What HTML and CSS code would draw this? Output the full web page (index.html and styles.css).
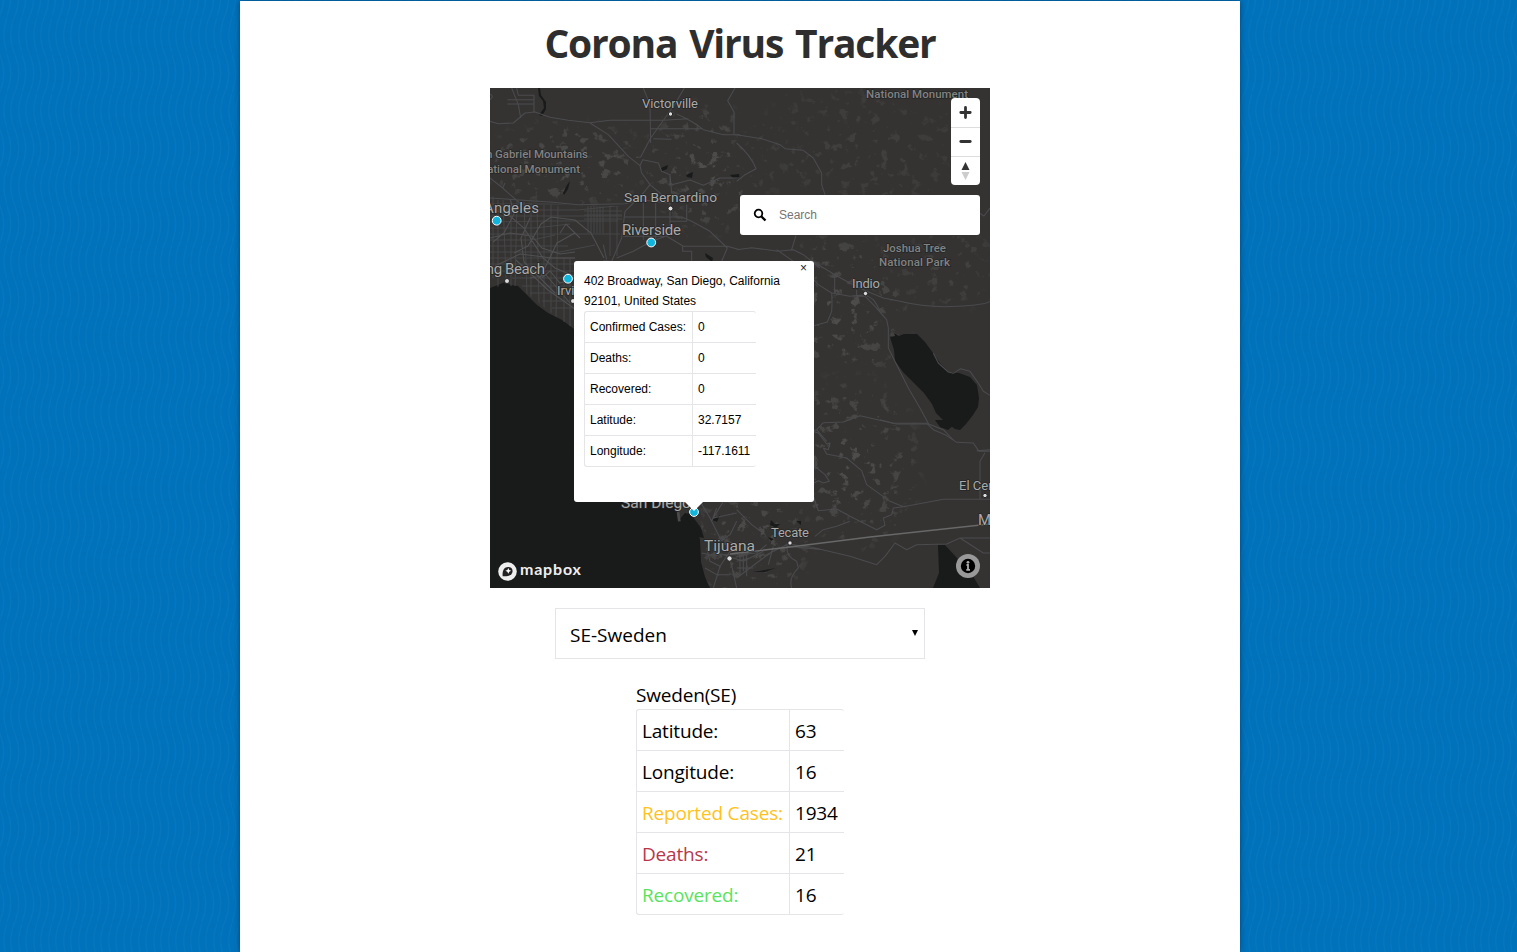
FILE: index.html
```html
<!DOCTYPE html>
<html lang="en">
<head>
<meta charset="utf-8">
<title>Corona Virus Tracker</title>
<link rel="stylesheet" href="styles.css">
</head>
<body>
<main class="page">
  <h1 class="title">Corona Virus Tracker</h1>
  <section class="map">
    <svg class="map-canvas" viewBox="0 0 500 500" width="500" height="500">
      <defs>
        <filter id="terrain" x="0" y="0" width="100%" height="100%">
          <feTurbulence type="fractalNoise" baseFrequency=".1 .11" numOctaves="4" seed="12"/>
          <feColorMatrix values="0 0 0 0 .27  0 0 0 0 .27  0 0 0 0 .265  9 0 0 0 -5.5"/>
        </filter>
        <radialGradient id="fade"><stop offset="0" stop-color="#fff"/><stop offset=".7" stop-color="#999"/><stop offset="1" stop-color="#000"/></radialGradient>
        <mask id="hills">
          <ellipse cx="80" cy="75" rx="100" ry="50" fill="url(#fade)"/>
          <ellipse cx="215" cy="80" rx="75" ry="75" fill="url(#fade)"/>
          <ellipse cx="370" cy="60" rx="130" ry="80" fill="url(#fade)" opacity=".5"/>
          <ellipse cx="350" cy="220" rx="80" ry="90" fill="url(#fade)"/>
          <ellipse cx="360" cy="375" rx="80" ry="100" fill="url(#fade)"/>
          <ellipse cx="260" cy="455" rx="70" ry="70" fill="url(#fade)"/>
          <ellipse cx="460" cy="180" rx="60" ry="50" fill="url(#fade)" opacity=".6"/>
        </mask>
        <clipPath id="basin"><path d="M0 108L45 114L92 118L135 118V170H85V242L65 228L40 208L26 198L0 199Z"/></clipPath>
      </defs>
      <rect width="500" height="500" fill="#343332"/>
      <rect width="500" height="500" filter="url(#terrain)" mask="url(#hills)" opacity=".3"/>

      <g fill="#191a1a">
        <path d="M0 200L8 197L15 194L21 197L28 198L37 207L47 217L58 225L72 232L84 241L120 300L160 370L187 414L189 432L195 425L202 428L208 443L210 452L211 474L215 489L220 500H0Z"/>
        <path d="M194 426L200 425L211 440L214 450L209 449Z"/>
        <path d="M400 249L405 248L404 245L409 248L414 246H427L435 254L443 265L450 275L459 284L469 285L480 289L487 297L489 310L488 319L483 327L476 336L470 342L465 341L454 333L446 325L442 316L434 305L426 297L413 284L405 273L404 262Z"/>
        <path d="M448 457H455L467 470L480 483L490 500H443L449 485Z"/>
        <path d="M445 332H465L465 336L458 342L450 339Z"/>
        <path d="M48 0H50L51 7L56 14V21L52 28L49 27L54 20L53 13L49 8Z"/>
        <path d="M73 105L77 97L80 93L78 101L74 107ZM171 80L178 77L177 81L172 83ZM196 87L203 84L202 90L197 89ZM240 87L249 86L250 91L243 90ZM215 165L223 170L222 174L216 169ZM281 432L285 436H290L286 440L280 437ZM306 433H311V437ZM222 432L230 427L227 434ZM278 449L284 451L281 453ZM263 484L275 482L286 480L280 482L275 484Z"/>
      </g>

      <g class="streets" clip-path="url(#basin)">
        <path d="M0 116H140M0 122H88L135 117M0 128H132M0 134L53 133H128M0 140H45L80 136M0 146H130M0 152H42L65 147M0 158H78M0 164H70L105 157M0 170H85M0 176H85M0 183H85M22 190H85M32 198H85M40 205H85M52 213H85M62 220H85M3 108V190M8 112V200M13 112L16 190M21 115V199M27 112L25 200M34 114L37 207M41 115V210M47 117L49 217M54 117V222M61 117V226M68 118L66 230M74 170V234M80 170V238M98 118V145M101 118V145M104 118V145M107 118V145M110 118V145M113 118V145M120 117V168M127 117V168M94 123H132M94 127H132M94 131H132"/>
        <path class="freeway" d="M0 120L20 128L34 140L53 170L65 180L84 188M0 150L20 145L42 148L52 160L70 166L85 164M12 100L20 110L24 126L14 145L3 154M24 165L38 158L51 136L61 129L85 132L101 145L114 170M26 172L58 202L85 221M40 130L31 150L34 174L65 205M85 145L67 155L50 190M5 178L30 166L62 170L85 170M70 145L76 136L90 150M52 190L60 183L70 195L84 190M40 190L56 187L80 215"/>
      </g>
      <g class="roads" transform="scale(.33333)">
        <path d="M0 100L25 107L70 105L105 75L135 72L180 88L235 97L300 104L360 97H520L595 92M65 0L85 50L92 90M80 0L85 22H132V72M52 35H132M52 48H132M0 35Q14 25 0 18M460 0L480 50L482 165M490 152L545 154M583 0L555 48L482 150L452 207L438 208M560 78Q610 100 640 125L700 140H750M482 122H635M735 0L713 38L732 72V140M300 105L355 140L415 205L450 233L458 215L505 225L515 250L540 260V292L600 276L640 292L690 270H750M450 233L455 255L480 290L510 315L540 350M540 260L545 315M480 290L460 315L405 370L395 450L365 520L340 518M0 330L180 342L265 350L405 347L450 335L540 345M405 387H575L605 400L660 430L712 480M540 345V440L485 460L430 490L380 510M400 445H530L580 475H712L750 485M460 345V455M497 345V455M540 400H590V350M340 470L350 515M540 420L510 430M712 480L695 520M578 475V490H605V518M0 270L38 300L60 320L90 345M45 285L38 300"/>
        <path d="M740 140L815 152L870 170L885 182L940 187L970 210L995 255L995 290L1005 320L1000 365M740 165Q785 205 798 242L765 260L740 280M740 485L785 479L865 490L910 485L940 500L990 540M860 485L910 520M905 485L918 442M1460 370L1482 384L1500 360"/>
        <path d="M962 516L1034 560L1085 588L1130 610L1180 630L1230 640Q1310 660 1400 655T1500 640M1034 560V615M962 565L985 590L1025 615L1080 625L1126 620M1025 615Q1027 640 1025 670L1012 702L960 716M1100 605V625H1126L1155 655L1190 695L1195 720V780L1220 830L1255 900L1290 960L1316 1008L1360 1025L1390 1056M1126 620L1150 635L1160 650L1170 668M1316 1008H1220L1110 983L1060 1002L1000 1004L980 1025L962 1030M980 1025L1010 1060M1330 796L1345 825L1375 852L1390 856L1412 842L1440 850L1465 885L1480 910L1500 922"/>
        <path d="M962 1028L985 1035L1010 1068L1020 1065L1015 1085L1000 1080L1010 1098L1070 1110L1115 1148L1130 1190L1200 1240L1240 1256L1360 1234H1500M962 1125L1005 1160L1018 1180L1000 1185L985 1178L962 1190M962 1200L985 1268L1040 1263L1080 1285L1160 1325L1185 1312L1180 1290L1205 1280L1210 1260L1240 1256M975 1345L1000 1325L1040 1315L1080 1300M1170 995L1210 1006H1310L1330 1025L1365 1040L1400 1063L1450 1065L1467 1090H1500M1485 1094L1470 1120V1235M1460 1088L1500 1085M740 1265L785 1310L826 1340M892 1365Q884 1405 920 1420L925 1440Q895 1470 905 1500M892 1368L965 1378L1080 1405L1160 1430L1185 1405L1215 1365L1250 1385L1280 1370L1370 1368L1410 1350H1500M892 1375L1000 1385M890 1370L840 1395L780 1440L740 1470M740 1400L800 1395L830 1370M850 1375L835 1430M1410 1350L1480 1395H1500"/>
        <path d="M630 1240L660 1290L690 1350L740 1370M680 1260L665 1300M700 1240L670 1290L740 1275M650 1380L660 1420L690 1435L720 1390L760 1395M635 1395L660 1400L740 1400M645 1440L680 1460L720 1460M690 1435L670 1500M700 1400L760 1420L820 1390M720 1410L740 1500M690 1360L720 1340L740 1300M740 1420L780 1410M750 1400V1465M760 1380V1450M770 1400V1465M740 1440H790"/>
        <path d="M564 1272L568 1300" stroke-width="8"/>
      </g>
      <path d="M240 466L300 459L380 449L500 436" fill="none" stroke="#686868" stroke-width="1.3"/>

      <g class="labels">
        <text x="152" y="20" textLength="56">Victorville</text>
        <text x="134" y="114" textLength="93" lengthAdjust="spacingAndGlyphs">San Bernardino</text>
        <g font-size="15"><text x="-6" y="125" textLength="55">Angeles</text><text x="132" y="147" textLength="59">Riverside</text><text x="-20" y="186" textLength="75">Long Beach</text><text x="131" y="420" textLength="70" lengthAdjust="spacingAndGlyphs">San Diego</text><text x="214" y="463" textLength="51" lengthAdjust="spacingAndGlyphs">Tijuana</text><text x="488" y="437">Mexicali</text></g>
        <text x="67" y="207">Irvine</text>
        <text x="362" y="200" textLength="28">Indio</text><text x="281" y="449" textLength="38">Tecate</text><text x="469" y="402">El Centro</text>
      </g>
      <g class="labels parks">
        <text x="376" y="10" textLength="102">National Monument</text>
        <text x="-17" y="70" textLength="115">San Gabriel Mountains</text><text x="-11" y="85" textLength="101">National Monument</text>
        <text x="393" y="164" textLength="63">Joshua Tree</text><text x="389" y="178" textLength="71">National Park</text>
      </g>
      <g fill="#ddd" stroke="#222" stroke-width="1"><circle cx="180.500" cy="26" r="2.200"/><circle cx="180.500" cy="120.500" r="2.500"/><circle cx="17" cy="193" r="2.500"/><circle cx="83" cy="213" r="2.500"/><circle cx="375.500" cy="205.500" r="2.200"/><circle cx="300" cy="455" r="2.200"/><circle cx="239.500" cy="470.500" r="2.700"/><circle cx="495" cy="407.500" r="2.200"/></g>
      <g fill="#11b4da" stroke="#fff"><circle cx="6.700" cy="132.700" r="4.400"/><circle cx="161.200" cy="154.500" r="4.400"/><circle cx="78" cy="190.700" r="4.400"/><circle cx="204" cy="424" r="4.400"/></g>
    </svg>

    <div class="zoom-controls">
      <button class="control" aria-label="Zoom in"><svg viewBox="0 0 29 29"><path d="M14.500 9.500V19.500M9.800 14.500H19.200" fill="none" stroke="#333" stroke-width="2.800" stroke-linecap="round"/></svg></button>
      <button class="control" aria-label="Zoom out"><svg viewBox="0 0 29 29"><path d="M9.800 13.500H19.200" fill="none" stroke="#333" stroke-width="2.800" stroke-linecap="round"/></svg></button>
      <button class="control" aria-label="Reset north"><svg viewBox="0 0 29 29"><path d="M10.500 13L14.500 5L18.500 13Z" fill="#333"/><path d="M10.500 15L14.500 23L18.500 15Z" fill="#ccc"/></svg></button>
    </div>

    <label class="search">
      <svg viewBox="0 0 14 14"><circle cx="5.500" cy="5.500" r="3.800" fill="none" stroke="#000" stroke-width="1.800"/><path d="M8.200 8.200L12.500 12.500" stroke="#000" stroke-width="2.300"/></svg>
      <input placeholder="Search">
    </label>

    <article class="popup">
      <button class="popup-close" aria-label="Close">×</button>
      <p class="address">402 Broadway, San Diego, California 92101, United States</p>
      <table class="facts">
        <tr><td>Confirmed Cases:</td><td>0</td></tr>
        <tr><td>Deaths:</td><td>0</td></tr>
        <tr><td>Recovered:</td><td>0</td></tr>
        <tr><td>Latitude:</td><td>32.7157</td></tr>
        <tr><td>Longitude:</td><td>-117.1611</td></tr>
      </table>
    </article>

    <div class="brand">
      <svg viewBox="0 0 19 19"><circle cx="9.500" cy="9.500" r="9.300" fill="#eee"/><path d="M4.700 14.200C4 8.500 6.200 4.900 10 4.900C13 4.900 14.600 6.500 14.600 9C14.600 12.800 10.500 15 4.700 14.200Z" fill="#222"/><path d="M10.300 5.900L11.200 7.900L13.200 8.800L11.200 9.700L10.300 11.700L9.400 9.700L7.400 8.800L9.400 7.900Z" fill="#fff"/></svg>
      <span>mapbox</span>
    </div>
    <svg class="info" viewBox="0 0 24 24"><circle cx="12" cy="12" r="12" fill="#999"/><circle cx="12" cy="12" r="7.200" fill="#000"/><circle cx="12" cy="8.300" r="1.400" fill="#aaa"/><path d="M10.500 11H12V15.500M10.300 15.800H14" fill="none" stroke="#aaa" stroke-width="1.800"/></svg>
  </section>

  <div class="select"><span>SE-Sweden</span><svg viewBox="0 0 6 6"><path d="M0 0H6L3 6Z"/></svg></div>

  <section class="country">
    <div class="country-name">Sweden(SE)</div>
    <table class="facts stats">
      <tr><td>Latitude:</td><td>63</td></tr>
      <tr><td>Longitude:</td><td>16</td></tr>
      <tr class="reported"><td>Reported Cases:</td><td>1934</td></tr>
      <tr class="deaths"><td>Deaths:</td><td>21</td></tr>
      <tr class="recovered"><td>Recovered:</td><td>16</td></tr>
    </table>
  </section>
</main>
</body>
</html>
```
FILE: styles.css
```css
* { box-sizing: border-box; }
html { height: 100%; }
body {
  margin: 0;
  padding-top: 1px;
  height: 952px;
  overflow: hidden;
  background-color: #0072bc;
  background-image: url("data:image/svg+xml,%3Csvg xmlns='http://www.w3.org/2000/svg' width='7.5' height='75.5' viewBox='0 0 7.5 75.5'%3E%3Cg fill='none' stroke='%231580c0' stroke-width='1' stroke-opacity='.32'%3E%3Cpath d='M-4-3C-4 15 3.500 17 3.500 35S-4 55-4 72.500S3.500 93 3.500 110'/%3E%3Cpath d='M3.500-3C3.500 15 11 17 11 35S3.500 55 3.500 72.500S11 93 11 110'/%3E%3C/g%3E%3C/svg%3E");
  background-position: 0 38px;
  font-family: "Open Sans", sans-serif;
  color: #000;
}
.page {
  width: 1000px;
  height: 951px;
  margin-left: 240px;
  background: #fff;
  box-shadow: 0 0 6px rgba(0, 0, 0, .4);
  display: flex;
  flex-direction: column;
  align-items: center;
}
.title {
  margin: 0;
  height: 87px;
  padding-top: 13px;
  font: 700 39px/58px "Open Sans", sans-serif;
  letter-spacing: -1.2px;
  word-spacing: 3px;
  color: #2e2e2e;
  white-space: nowrap;
}
.map { position: relative; width: 500px; height: 500px; flex: none; overflow: hidden; }
.map-canvas { display: block; }
.streets { fill: none; stroke: #48484a; stroke-width: .9; }
.freeway { stroke: #505052; stroke-width: 1.1; }
.roads { fill: none; stroke: #4b4b4e; stroke-width: 3.2; stroke-linejoin: round; }
.labels {
  font-family: Roboto, sans-serif;
  font-size: 13px;
  fill: #aaa;
  stroke: #262626;
  stroke-width: 1.5px;
  paint-order: stroke;
}
.labels.parks { font-size: 11.5px; font-weight: 500; fill: #828282; }

.zoom-controls {
  position: absolute;
  top: 10px;
  right: 10px;
  width: 29px;
  border-radius: 4px;
  background: #fff;
  overflow: hidden;
}
.control { display: block; width: 29px; height: 29px; padding: 0; border: 0; background: none; }
.control + .control { border-top: 1px solid #ddd; }
.control svg { display: block; width: 29px; height: 29px; }

.search {
  position: absolute;
  top: 107px;
  right: 10px;
  width: 240px;
  height: 40px;
  padding-left: 13px;
  display: flex;
  align-items: center;
  gap: 12px;
  background: #fff;
  border-radius: 3px;
}
.search svg { width: 14px; height: 14px; }
.search input { width: 180px; padding: 0; border: 0; font: 12px "Liberation Sans", sans-serif; }
.search input::placeholder { color: #757575; }

.popup {
  position: absolute;
  left: 84px;
  top: 173px;
  width: 240px;
  height: 241px;
  padding: 10px 10px 0;
  background: #fff;
  border-radius: 3px;
  font: 12px/20px "Liberation Sans", sans-serif;
}
.popup::after {
  content: "";
  position: absolute;
  left: 110px;
  top: 240px;
  border: 10px solid transparent;
  border-top-color: #fff;
  border-bottom: 0;
}
.popup-close {
  position: absolute;
  top: 0;
  right: 7px;
  padding: 0;
  border: 0;
  background: none;
  font: 12px/14px "Liberation Sans", sans-serif;
  color: #222;
}
.address { margin: 0; }

.facts { width: 172px; border-spacing: 0; table-layout: fixed; }
.facts td {
  height: 31px;
  padding: 0 0 0 5px;
  border: solid #e5e5e7;
  border-width: 0 0 1px 1px;
  white-space: nowrap;
}
.facts td:first-child { width: 108px; }
.facts tr:first-child td { height: 32px; border-top-width: 1px; }
.facts tr:first-child td:first-child { border-top-left-radius: 3px; }
.facts tr:first-child td:last-child { border-top-right-radius: 3px; }
.facts tr:last-child td:first-child { border-bottom-left-radius: 3px; }
.facts tr:last-child td:last-child { border-bottom-right-radius: 3px; }

.brand {
  position: absolute;
  left: 8px;
  top: 471px;
  display: flex;
  align-items: center;
  gap: 3px;
  font: 700 16px/20px Lato, sans-serif;
  color: #eee;
}
.brand svg { width: 19px; height: 19px; }
.brand span { padding-bottom: 4px; letter-spacing: .8px; }
.info { position: absolute; right: 10px; bottom: 10px; width: 24px; height: 24px; }

.select {
  width: 370px;
  height: 51px;
  margin-top: 20px;
  padding: 2px 6px 0 14px;
  flex: none;
  display: flex;
  align-items: center;
  justify-content: space-between;
  border: 1px solid #e5e5e7;
  font-size: 19px;
}
.select svg { width: 6px; height: 6px; margin-top: -4px; }
.country { width: 208px; margin-top: 21px; font-size: 19px; letter-spacing: -.18px; }
.country-name { height: 29px; line-height: 31px; }
.stats { width: 208px; }
.stats td { height: 41px; padding-top: 2px; }
.stats tr:first-child td { height: 42px; }
.stats td:first-child { width: 153px; }
.reported td:first-child { color: #ffc220; }
.deaths td:first-child { color: #b93648; }
.recovered td:first-child { color: #5be35b; }
```
